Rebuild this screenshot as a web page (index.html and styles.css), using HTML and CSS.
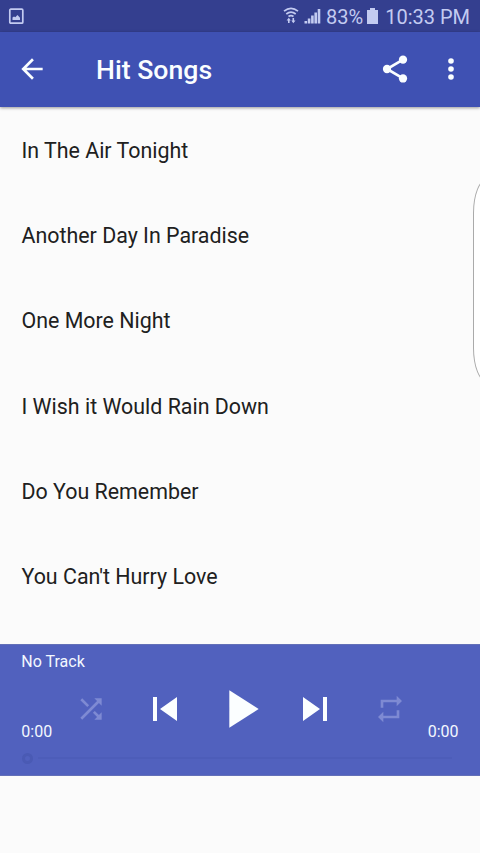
FILE: index.html
```html
<!DOCTYPE html>
<html lang="en">
<head>
<meta charset="utf-8">
<title>Hit Songs</title>
<link rel="stylesheet" href="styles.css">
</head>
<body>
<div class="status">
  <svg class="picture" width="16" height="17" viewBox="0 0 16 17"><rect x="1.800" y="1.200" width="13" height="14" rx="1" fill="none" stroke="currentColor" stroke-width="1.700"/><path d="M4.500 12V9.500L6 8.500l1.300.700L9.500 7l2.500 2.800V12z" fill="currentColor"/></svg>
  <svg class="wifi" width="16" height="18" viewBox="0 0 16 18"><path d="M1 4.200Q8-1.300 15 4.200M3.300 7Q8 3.300 12.700 7M5.500 9.500Q8 7.700 10.500 9.500" fill="none" stroke="currentColor" stroke-width="1.700"/><path d="M5.800 10.800l2 2.700H6.600V16H5v-2.500H3.600zM10.300 16.300l-2-2.700h1.200V11h1.600v2.600h1.400z" fill="currentColor"/></svg>
  <svg class="signal" width="17" height="16" viewBox="0 0 17 16"><path d="M.500 13h2.600v2.500H.500zM3.800 10.500h2.600v5H3.800zM7.100 7.500h2.600v8H7.100zM10.400 4.500H13v11h-2.600zM13.700 1h2.600v14.500h-2.600z" fill="currentColor"/></svg>
  <span class="percent">83%</span>
  <svg class="battery" width="11" height="16" viewBox="0 0 11 16"><path d="M3 0h5v2h3v14H0V2h3z" fill="currentColor"/></svg>
  <span class="clock">10:33 PM</span>
</div>
<header class="bar">
  <svg class="icon" viewBox="0 0 24 24"><path d="M20 11H7.830l5.590-5.590L12 4l-8 8 8 8 1.410-1.410L7.830 13H20v-2z"/></svg>
  <h1>Hit Songs</h1>
  <svg class="icon share" viewBox="0 0 24 24"><path d="M18 5L6 12l12 7.100" fill="none" stroke="currentColor" stroke-width="2"/><circle cx="18" cy="5" r="3.100"/><circle cx="6" cy="12" r="3.100"/><circle cx="18" cy="19.100" r="3.100"/></svg>
  <svg class="icon" viewBox="0 0 24 24"><circle cx="12" cy="6" r="2.100"/><circle cx="12" cy="12" r="2.100"/><circle cx="12" cy="18" r="2.100"/></svg>
</header>
<ul class="songs">
  <li>In The Air Tonight</li>
  <li>Another Day In Paradise</li>
  <li>One More Night</li>
  <li>I Wish it Would Rain Down</li>
  <li>Do You Remember</li>
  <li>You Can't Hurry Love</li>
</ul>
<section class="player">
  <div class="track">No Track</div>
  <div class="controls">
    <span class="time">0:00</span>
    <div class="buttons">
      <svg class="mode" viewBox="0 0 24 24"><path d="M10.590 9.170L5.410 4 4 5.410l5.170 5.170 1.420-1.410zM14.500 4l2.040 2.040L4 18.590 5.410 20 17.960 7.460 20 9.500V4h-5.500zm.33 9.410l-1.410 1.410 3.130 3.130L14.500 20H20v-5.500l-2.040 2.040-3.130-3.130z"/></svg>
      <div class="transport">
        <svg class="skip" viewBox="0 0 24 24"><path d="M6 6h2v12H6zm3.500 6l8.500 6V6z"/></svg>
        <svg class="play" viewBox="0 0 24 24"><path d="M8 5v14l11-7z"/></svg>
        <svg class="skip" viewBox="0 0 24 24"><path d="M6 18l8.500-6L6 6v12zM16 6v12h2V6h-2z"/></svg>
      </div>
      <svg class="mode" viewBox="0 0 24 24"><path d="M7 7h10v3l4-4-4-4v3H5v6h2V7zm10 10H7v-3l-4 4 4 4v-3h12v-6h-2v4z"/></svg>
    </div>
    <span class="time">0:00</span>
  </div>
  <div class="seek"><span class="thumb"></span><span class="line"></span></div>
</section>
<div class="edge"></div>
</body>
</html>
```
FILE: styles.css
```css
* { box-sizing: border-box; }
body {
  margin: 0;
  height: 853px;
  position: relative;
  overflow: hidden;
  background: #fbfbfb;
  color: #202020;
  font-family: Roboto, "Liberation Sans", sans-serif;
}
svg { display: block; flex: none; fill: currentColor; }
.status {
  height: 32px;
  padding: 0 10px 0 8px;
  display: flex;
  align-items: center;
  background: #343f8f;
  color: #c3cbf1;
  font-size: 20px;
  line-height: 32px;
  white-space: nowrap;
}
.wifi { margin-left: auto; margin-right: 5px; }
.signal { margin-right: 5px; }
.percent { margin-right: 4px; }
.battery { margin-right: 7px; }
.status span { padding-top: 2px; }
.bar {
  height: 75px;
  padding: 0 13.500px 1px 16px;
  display: flex;
  align-items: center;
  background: #3f51b3;
  color: #fafeff;
  box-shadow: 0 1px 3px rgba(0, 0, 0, .4);
}
.icon { width: 32px; height: 32px; }
.bar h1 {
  flex: 1;
  margin: 1px 0 0 48px;
  font-size: 26.670px;
  font-weight: 500;
  line-height: 32px;
}
.share { margin-right: 23.500px; }
.songs {
  height: 537px;
  margin: 0;
  padding: .7px 21.500px 0;
  list-style: none;
  font-size: 21.400px;
}
.songs li { height: 85.300px; line-height: 85.300px; }
.player {
  height: 132px;
  padding: 7px 21.300px 0;
  background: #5161be;
  color: #f3f8ff;
  font-size: 16px;
  border-top: 1px solid #6370b8;
  border-bottom: 1px solid #6370b8;
}
.track { height: 19px; line-height: 19px; }
.controls {
  height: 64px;
  margin-top: 6px;
  display: flex;
  justify-content: space-between;
}
.time { width: 31px; align-self: flex-end; line-height: 19px; }
.buttons {
  width: 331px;
  display: flex;
  align-items: center;
  justify-content: space-between;
  color: #fbfeff;
}
.transport { display: flex; align-items: center; gap: 18.700px; }
.mode { width: 32px; height: 32px; color: #7e8ad3; }
.skip { width: 48px; height: 48px; }
.play { width: 64px; height: 64px; }
.seek { height: 34px; padding: 0 7px 0 1px; display: flex; align-items: center; }
.thumb { width: 11px; height: 11px; border: 3px solid #4a5ab4; border-radius: 50%; }
.line { flex: 1; height: 2px; margin-left: 5px; background: #4d5db9; }
.edge {
  position: absolute;
  left: 473px;
  top: 179px;
  width: 30px;
  height: 203px;
  border: 1px solid #aaa;
  border-radius: 14px / 34px;
  background: #fff;
}
```
